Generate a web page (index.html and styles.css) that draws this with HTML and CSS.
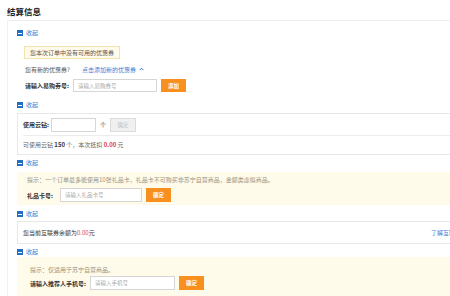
FILE: index.html
```html
<!DOCTYPE html>
<html lang="zh-CN">
<head>
<meta charset="utf-8">
<title>结算信息</title>
<link rel="stylesheet" href="styles.css">
</head>
<body>
<div class="page">
  <h2 class="title">结算信息</h2>
  <div class="panel">
    <section class="sec">
      <div class="toggle"><span class="ico"></span><span class="tg-text">收起</span></div>
      <div class="s1-body">
        <div class="notice">您本次订单中没有可用的优惠券</div>
        <div class="row r-new"><span class="muted">您有新的优惠券?</span><span class="link">点击添加新的优惠券</span><svg class="caret" width="5" height="4" viewBox="0 0 5 4"><path d="M0.5 3.2 L2.5 1.2 L4.5 3.2" fill="none" stroke="#3a7fd4" stroke-width="1"/></svg></div>
        <div class="row form f1"><span class="lbl">请输入易购券号:</span><input class="inp w84" placeholder="请输入易购券号"><button class="btn">添加</button></div>
      </div>
    </section>

    <section class="sec">
      <div class="toggle t2"><span class="ico"></span><span class="tg-text">收起</span></div>
      <div class="box b2">
        <div class="b2-top"><span class="lbl">使用云钻:</span><input class="inp w45"><span class="unit">个</span><button class="btn btn-off">确定</button></div>
        <div class="b2-bottom">可使用云钻 <b>150</b> 个，本次抵扣 <b class="red">0.00</b> 元</div>
      </div>
    </section>

    <section class="sec">
      <div class="toggle t3"><span class="ico"></span><span class="tg-text">收起</span></div>
      <div class="tipbox y3">
        <div class="tip">提示：一个订单最多能使用10张礼品卡，礼品卡不可购买非苏宁自营商品，金额类虚拟商品。</div>
        <div class="row form f3"><span class="lbl l3">礼品卡号:</span><input class="inp w82" placeholder="请输入礼品卡号"><button class="btn">确定</button></div>
      </div>
    </section>

    <section class="sec">
      <div class="toggle t4"><span class="ico"></span><span class="tg-text">收起</span></div>
      <div class="box b4"><span class="dark">您当前互联券余额为<span class="red">0.00</span>元</span><span class="link">了解互联券</span></div>
    </section>

    <section class="sec">
      <div class="toggle t5"><span class="ico"></span><span class="tg-text">收起</span></div>
      <div class="tipbox y5">
        <div class="tip">提示：仅适用于苏宁自营商品。</div>
        <div class="row form f5"><span class="lbl">请输入推荐人手机号:</span><input class="inp w85" placeholder="请输入手机号"><button class="btn">确定</button></div>
      </div>
    </section>
  </div>
</div>
</body>
</html>
```

FILE: styles.css
```css
html, body {
  margin: 0;
  padding: 0;
  overflow: hidden;
  background: #fff;
}
body {
  width: 450px;
  height: 296px;
  font-family: "Noto Sans CJK SC", "Noto Sans", sans-serif;
  font-size: 6px;
  color: #333;
}
.page {
  width: 480px;
}
.title {
  margin: 0;
  padding: 3px 0 0 7px;
  height: 17px;
  line-height: 17px;
  font-size: 8.5px;
  font-weight: bold;
  color: #222;
}
.panel {
  margin-left: 7px;
  width: 453px;
  border-top: 1px solid #eeeeee;
  border-left: 1px solid #f2f2f2;
  padding: 7px 0 0 9px;
}
.sec {
  display: flex;
  flex-direction: column;
}
.toggle {
  height: 10px;
  display: flex;
  align-items: center;
  gap: 3px;
}
.ico {
  width: 6px;
  height: 6px;
  background: #1f6fc9;
  position: relative;
  display: block;
}
.ico::after {
  content: "";
  position: absolute;
  left: 1px;
  top: 2.5px;
  width: 4px;
  height: 1px;
  background: #fff;
}
.tg-text {
  color: #3a7fd4;
  font-size: 6px;
  line-height: 10px;
}
.s1-body {
  padding-left: 7px;
  display: flex;
  flex-direction: column;
  align-items: flex-start;
}
.notice {
  margin-top: 8px;
  height: 11px;
  line-height: 11px;
  padding: 0 5px;
  border: 1px solid #f3e3b0;
  background: #fffbea;
  color: #555;
}
.row {
  display: flex;
  align-items: center;
}
.r-new {
  margin-top: 4px;
  height: 12px;
  padding-left: 1px;
  gap: 0;
}
.muted {
  color: #555;
  width: 57px;
}
.link {
  color: #3a7fd4;
}
.caret {
  margin-left: 3px;
}
.form {
  gap: 4px;
}
.f1 {
  margin-top: 4px;
  height: 13px;
  padding-left: 1px;
}
.lbl {
  font-weight: bold;
  color: #333;
  white-space: nowrap;
}
.inp {
  box-sizing: border-box;
  height: 13px;
  border: 1px solid #d6d6d6;
  padding: 0 4px;
  font-family: "Noto Sans CJK SC", "Noto Sans", sans-serif;
  font-size: 5.5px;
  color: #333;
  outline: none;
  margin: 0;
}
.inp::placeholder {
  color: #aaa;
}
.w84 { width: 84px; }
.w45 { width: 45px; height: 14px; }
.w82 { width: 82px; }
.w85 { width: 85px; }
.btn {
  box-sizing: border-box;
  width: 25px;
  height: 13px;
  border: 0;
  margin: 0;
  padding: 0;
  background: #f7901e;
  color: #fff;
  font-family: "Noto Sans CJK SC", "Noto Sans", sans-serif;
  font-size: 5.5px;
  font-weight: bold;
}
.btn-off {
  width: 26px;
  height: 14px;
  background: #f0f0f0;
  border: 1px solid #dcdcdc;
  color: #c2c2c2;
  font-weight: normal;
}
.t2 { margin-top: 8px; }
.box {
  border: 1px solid #e8e8e8;
  padding-left: 5px;
}
.b2 {
  margin-top: 3px;
  padding-left: 0;
  display: flex;
  flex-direction: column;
}
.b2-top {
  height: 21px;
  display: flex;
  align-items: center;
  padding-left: 5px;
}
.b2-top .lbl {
  margin-right: 2px;
}
.unit {
  margin: 0 4px;
  color: #333;
}
.b2-bottom {
  margin-left: 5px;
  border-top: 1px solid #ececec;
  height: 18px;
  line-height: 18px;
  color: #666;
}
.b2-bottom b {
  color: #333;
}
.red {
  color: #e4393c;
}
.b2-bottom b.red {
  color: #e4393c;
}
.t3 { margin-top: 3px; }
.tipbox {
  background: #fffbeb;
  display: flex;
  flex-direction: column;
}
.tip {
  color: #9a9380;
  white-space: nowrap;
}
.y3 {
  margin-top: 4px;
  padding: 3px 0 3px 10px;
}
.y3 .tip {
  line-height: 9px;
}
.f3 {
  margin-top: 4px;
  height: 14px;
}
.l3 {
  margin-right: 3px;
}
.t4 { margin-top: 4px; }
.b4 {
  margin-top: 2px;
  height: 21px;
  display: flex;
  align-items: center;
  justify-content: space-between;
  padding-right: 8px;
}
.dark {
  color: #333;
}
.t5 { margin-top: 3px; }
.y5 {
  padding: 8px 0 10px 13px;
}
.y5 .tip {
  line-height: 10px;
}
.f5 {
  margin-top: 1px;
  height: 14px;
}
.f5 .inp, .f5 .btn, .f3 .inp, .f3 .btn {
  height: 14px;
}
```
